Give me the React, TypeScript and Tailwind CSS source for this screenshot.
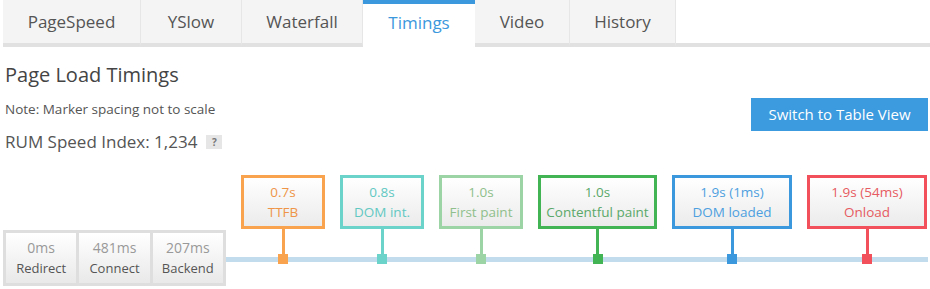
const tabs = [
  { label: "PageSpeed", w: "w-[138px]" },
  { label: "YSlow", w: "w-[101px]" },
  { label: "Waterfall", w: "w-[121px]" },
  { label: "Timings", w: "w-[112px]", active: true },
  { label: "Video", w: "w-[95px]" },
  { label: "History", w: "w-[106px]" },
];

const phases = [
  { time: "0ms", label: "Redirect" },
  { time: "481ms", label: "Connect" },
  { time: "207ms", label: "Backend" },
];

const markers = [
  { time: "0.7s", label: "TTFB", w: "w-[84px]", border: "border-[#f9a34f]", text: "text-[#ee9548]", bg: "bg-[#f9a34f]" },
  { time: "0.8s", label: "DOM int.", w: "w-[84px]", border: "border-[#6cd3cb]", text: "text-[#62c8c2]", bg: "bg-[#6cd3cb]" },
  { time: "1.0s", label: "First paint", w: "w-[84px]", border: "border-[#9cd4a6]", text: "text-[#8fbf8c]", bg: "bg-[#9cd4a6]" },
  { time: "1.0s", label: "Contentful paint", w: "w-[119px]", border: "border-[#42b454]", text: "text-[#5aa86a]", bg: "bg-[#42b454]" },
  { time: "1.9s (1ms)", label: "DOM loaded", w: "w-[120px]", border: "border-[#3c98dd]", text: "text-[#4d9fdf]", bg: "bg-[#3c98dd]" },
  { time: "1.9s (54ms)", label: "Onload", w: "w-[120px]", border: "border-[#f2505a]", text: "text-[#e65a61]", bg: "bg-[#f2505a]" },
];

export default function App() {
  return (
    <div className="w-[930px] h-[289px] bg-white overflow-hidden font-['Open_Sans',sans-serif] text-[#555]">
      {/* tab strip */}
      <div className="flex pl-[3px]">
        {tabs.map((t) =>
          t.active ? (
            <div
              key={t.label}
              className={`${t.w} h-[47px] border-t-4 border-[#3c98dd] bg-white flex items-center justify-center pb-[5px] text-[17px] text-[#3c98dd]`}
            >
              {t.label}
            </div>
          ) : (
            <div
              key={t.label}
              className={`${t.w} h-[47px] border-b-4 border-b-[#e1e1e1] border-r border-r-[#e6e6e6] bg-[#f4f4f4] flex items-center justify-center text-[17px] text-[#555]`}
            >
              {t.label}
            </div>
          )
        )}
        <div className="flex-1 h-[47px] border-b-4 border-[#e1e1e1]" />
      </div>

      <div className="pl-[5px] pr-[2px]">
        <h2 className="mt-[14px] text-[20px] leading-[28px] text-[#444]">Page Load Timings</h2>
        <div className="flex justify-between items-start mt-[9px]">
          <div>
            <div className="mt-[2px] text-[13.5px] leading-[18px] text-[#555]">Note: Marker spacing not to scale</div>
            <div className="mt-[12px] flex items-center gap-[9px]">
              <span className="text-[17px] leading-[24px] text-[#555]">RUM Speed Index: 1,234</span>
              <span className="w-[16px] h-[14px] bg-[#e6e6e6] text-[10px] font-bold text-[#777] flex items-center justify-center">?</span>
            </div>
          </div>
          <button className="w-[177px] h-[33px] bg-[#3c9ade] text-white text-[15px] flex items-center justify-center">
            Switch to Table View
          </button>
        </div>
      </div>

      {/* timeline */}
      <div className="relative flex items-end pl-[3px] mt-[21px]">
        <div className="w-[223px] h-[56px] bg-[#dedede] p-[3px] flex gap-[3px] shrink-0">
          {phases.map((p) => (
            <div
              key={p.label}
              className="flex-1 bg-gradient-to-b from-white to-[#e9e9e9] flex flex-col items-center justify-center leading-[20px]"
            >
              <span className="text-[14px] text-[#999]">{p.time}</span>
              <span className="text-[13px] text-[#555]">{p.label}</span>
            </div>
          ))}
        </div>
        <div className="relative flex gap-[15px] pl-[15px] pb-[22px]">
          <div className="absolute left-0 w-[702px] bottom-[24px] h-[5px] bg-[#c2dcee]" />
          {markers.map((m) => (
            <div key={m.label} className="relative flex flex-col items-center">
              <div
                className={`${m.w} h-[54px] border-[3px] ${m.border} ${m.text} bg-gradient-to-b from-white to-[#ebebeb] flex flex-col items-center justify-center text-[13.5px] leading-[20px]`}
              >
                <span>{m.time}</span>
                <span>{m.label}</span>
              </div>
              <div className={`w-[3px] h-[25px] ${m.bg}`} />
              <div className={`w-[10px] h-[10px] ${m.bg}`} />
            </div>
          ))}
        </div>
      </div>
    </div>
  );
}
